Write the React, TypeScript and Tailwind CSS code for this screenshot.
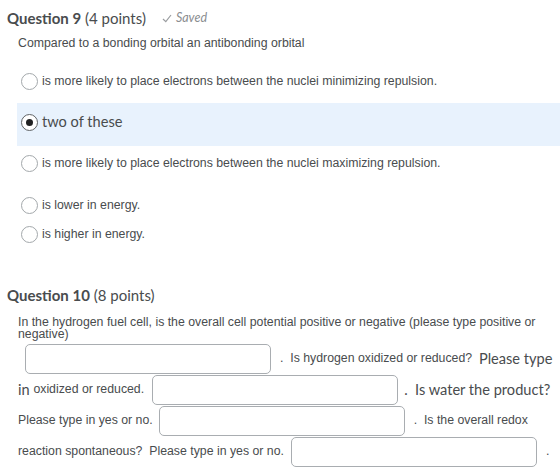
import React from 'react'

const body = 'font-["Liberation_Sans",Arial,sans-serif]'
const lato = 'font-["Lato","Open_Sans",sans-serif]'

function Radio({ checked = false }: { checked?: boolean }) {
  return (
    <span
      className={`flex h-[17px] w-[17px] shrink-0 items-center justify-center rounded-full border bg-white ${
        checked ? 'border-[#5f6366]' : 'border-[#a3a8ab]'
      }`}
    >
      {checked && <span className="h-[7px] w-[7px] rounded-full bg-[#202122]" />}
    </span>
  )
}

function Blank({ className = '' }: { className?: string }) {
  return (
    <input
      type="text"
      className={`h-[30px] w-[246px] shrink-0 rounded-[5px] border border-[#a9adb1] bg-white ${className}`}
    />
  )
}

function QuestionHeading({ number, points }: { number: number; points: number }) {
  return (
    <h2 className={`${lato} text-[15px] text-[#494c4e]`}>
      <span className="font-bold">Question {number}</span> ({points} points)
    </h2>
  )
}

export default function App() {
  return (
    <div className="min-h-[473px] w-[560px] bg-white text-[#494c4e]">
      {/* Question 9 */}
      <div className="flex h-[36px] items-center pl-[7px]">
        <QuestionHeading number={9} points={4} />
        <span className={`${lato} ml-[16px] flex items-center text-[12.5px] italic text-[#8a8d90]`}>
          <svg width="10" height="9" viewBox="0 0 10 9" className="mr-[4px]">
            <path d="M1 5 L3.8 7.6 L9 1" fill="none" stroke="#9a9da0" strokeWidth="1.2" />
          </svg>
          Saved
        </span>
      </div>
      <p className={`${body} pl-[18px] text-[12.3px] leading-[14px]`}>
        Compared to a bonding orbital an antibonding orbital
      </p>

      <div className={`${body} text-[12.3px]`}>
        <label className="mt-[23px] flex h-[17px] items-center pl-[21px]">
          <Radio />
          <span className="ml-[4px]">is more likely to place electrons between the nuclei minimizing repulsion.</span>
        </label>
        <label className="ml-[17px] mt-[13px] flex h-[43px] items-center bg-[#e8f2fd] pb-[5px] pl-[4px]">
          <Radio checked />
          <span className={`${lato} ml-[4px] text-[14.6px]`}>two of these</span>
        </label>
        <label className="mt-[9px] flex h-[17px] items-center pl-[21px]">
          <Radio />
          <span className="ml-[4px]">is more likely to place electrons between the nuclei maximizing repulsion.</span>
        </label>
        <label className="mt-[25px] flex h-[17px] items-center pl-[21px]">
          <Radio />
          <span className="ml-[4px]">is lower in energy.</span>
        </label>
        <label className="mt-[12px] flex h-[17px] items-center pl-[21px]">
          <Radio />
          <span className="ml-[4px]">is higher in energy.</span>
        </label>
      </div>

      {/* Question 10 */}
      <div className="mt-[40px] flex h-[24px] items-center pl-[7px]">
        <QuestionHeading number={10} points={8} />
      </div>
      <div className={`${body} mt-[9px] pl-[18px] text-[12.3px]`}>
        <p className="pr-[14px] leading-[12px]">
          In the hydrogen fuel cell, is the overall cell potential positive or negative (please type positive or
          negative)
        </p>
        <div className="mt-[3px] flex h-[31px] items-center whitespace-pre">
          <Blank className="ml-[7px]" />
          <span className="ml-[9px]">.  Is hydrogen oxidized or reduced?  </span>
          <span className={`${lato} text-[14.6px]`}>Please type</span>
        </div>
        <div className="flex h-[31px] items-center whitespace-pre">
          <span className={`${lato} text-[14.6px]`}>in </span>
          <span>oxidized or reduced.</span>
          <Blank className="ml-[8px]" />
          <span className={`${lato} ml-[6px] text-[14.6px]`}>.  Is water the product?</span>
        </div>
        <div className="flex h-[31px] items-center whitespace-pre">
          <span>Please type in yes or no.</span>
          <Blank className="ml-[6px]" />
          <span className="ml-[9px]">.  Is the overall redox</span>
        </div>
        <div className="flex h-[31px] items-center whitespace-pre">
          <span>reaction spontaneous?  Please type in yes or no.</span>
          <Blank className="ml-[7px]" />
          <span className="ml-[9px]">.</span>
        </div>
      </div>
    </div>
  )
}
